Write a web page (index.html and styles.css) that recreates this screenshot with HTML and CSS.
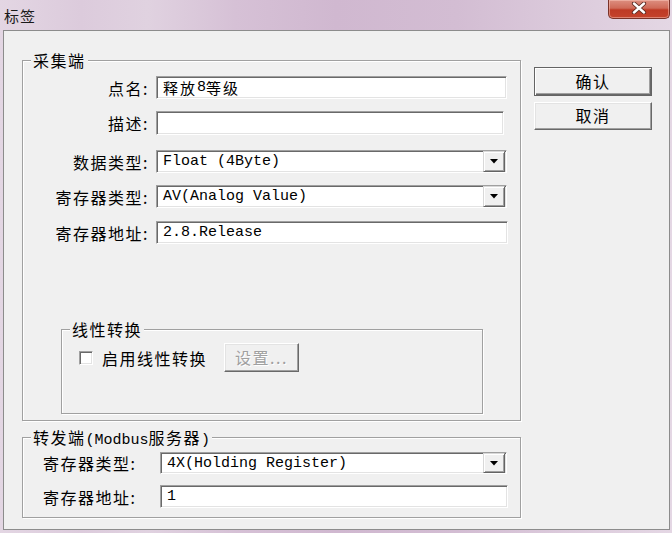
FILE: index.html
```html
<!DOCTYPE html>
<html lang="zh">
<head>
<meta charset="utf-8">
<title>标签</title>
<link rel="stylesheet" href="styles.css">
</head>
<body>
<div class="window">
  <div class="titlebar">
    <span class="title">标签</span>
    <div class="close">
      <svg width="16" height="12" viewBox="0 0 16 12">
        <path d="M3 1.5 L13 10.5 M13 1.5 L3 10.5" stroke="#5a2a22" stroke-width="4.2" stroke-linecap="round"/>
        <path d="M3 1.5 L13 10.5 M13 1.5 L3 10.5" stroke="#ffffff" stroke-width="2.4" stroke-linecap="round"/>
      </svg>
    </div>
  </div>
  <div class="client">
    <div class="main">
      <div class="group g1">
        <div class="legend">采集端</div>
        <div class="row r1">
          <span class="lbl">点名:</span>
          <div class="edit w351"><span class="cjk">释放</span>8<span class="cjk">等级</span></div>
        </div>
        <div class="row r2">
          <span class="lbl">描述:</span>
          <div class="edit w348 h24"></div>
        </div>
        <div class="row r3">
          <span class="lbl">数据类型:</span>
          <div class="edit combo w351"><span class="val">Float (4Byte)</span><span class="drop"><svg width="8" height="5" viewBox="0 0 8 5"><polygon points="0,0 8,0 4,4.5" fill="#000"/></svg></span></div>
        </div>
        <div class="row r4">
          <span class="lbl">寄存器类型:</span>
          <div class="edit combo w351"><span class="val">AV(Analog Value)</span><span class="drop"><svg width="8" height="5" viewBox="0 0 8 5"><polygon points="0,0 8,0 4,4.5" fill="#000"/></svg></span></div>
        </div>
        <div class="row r5">
          <span class="lbl">寄存器地址:</span>
          <div class="edit w352">2.8.Release</div>
        </div>
        <div class="group glin">
          <div class="legend">线性转换</div>
          <div class="linrow">
            <span class="check"></span>
            <span class="chklbl">启用线性转换</span>
            <div class="btn disabled">设置...</div>
          </div>
        </div>
      </div>
      <div class="group g2">
        <div class="legend">转发端<span class="asc">(Modbus</span>服务器<span class="asc">)</span></div>
        <div class="row2 first">
          <span class="lbl2">寄存器类型:</span>
          <div class="edit combo w347 h22"><span class="val">4X(Holding Register)</span><span class="drop"><svg width="8" height="5" viewBox="0 0 8 5"><polygon points="0,0 8,0 4,4.5" fill="#000"/></svg></span></div>
        </div>
        <div class="row2 second">
          <span class="lbl2">寄存器地址:</span>
          <div class="edit w348 h23">1</div>
        </div>
      </div>
    </div>
    <div class="side">
      <div class="btn default">确认</div>
      <div class="btn cancel">取消</div>
    </div>
  </div>
</div>
</body>
</html>
```
FILE: styles.css
```css
* { box-sizing: border-box; }
html, body { margin: 0; padding: 0; }
body {
  width: 672px;
  height: 533px;
  overflow: hidden;
  background: #d9c8d9;
  font-family: "Noto Sans CJK SC", "Noto Sans", sans-serif;
  color: #000;
}
.window {
  width: 672px;
  height: 533px;
  display: flex;
  flex-direction: column;
  background: linear-gradient(90deg, #e3d6e3 0%, #dccbdc 12%, #e0d2e0 22%, #d6c1d6 35%, #d0b8d0 50%, #d3bdd3 68%, #dccbdc 85%, #e4d7e4 100%);
}
.titlebar {
  height: 30px;
  display: flex;
  align-items: flex-start;
  padding-left: 4px;
}
.title {
  font-size: 15px;
  line-height: 15px;
  letter-spacing: 1px;
  margin-top: 8px;
  color: #1a1a1a;
}
.close {
  margin-left: auto;
  margin-right: 2px;
  width: 62px;
  height: 19px;
  border: 1px solid #7a3228;
  border-top: none;
  border-radius: 0 0 5px 5px;
  background: linear-gradient(180deg, #dd8f80 0%, #cf6a58 45%, #be3a25 55%, #c4432c 100%);
  box-shadow: inset 0 0 0 1px rgba(255, 210, 200, 0.45);
  display: flex;
  align-items: center;
  justify-content: center;
  padding-bottom: 2px;
}
.client {
  margin: 0 2px 3px 3px;
  height: 500px;
  border: 1px solid #8c8c8c;
  background: #f0f0f0;
  display: flex;
  padding-left: 18px;
}
.main {
  width: 499px;
  padding-top: 29px;
  display: flex;
  flex-direction: column;
}
.group {
  border: 1px solid #a0a0a0;
  box-shadow: inset 1px 1px 0 #fff, 1px 1px 0 #fff;
  display: flex;
  flex-direction: column;
}
.legend {
  align-self: flex-start;
  height: 20px;
  line-height: 20px;
  margin: -11px 0 -9px 8px;
  padding: 0 2px;
  background: #f0f0f0;
  font-size: 16px;
  letter-spacing: 1.5px;
  white-space: nowrap;
}
.asc {
  font-family: "Liberation Mono", monospace;
  font-size: 15px;
  letter-spacing: 0;
}
.g1 {
  width: 499px;
  height: 361px;
}
.row {
  display: flex;
  align-items: center;
}
.r1 { margin-top: 15px; }
.r2 { margin-top: 12px; }
.r3 { margin-top: 15px; }
.r4 { margin-top: 12px; }
.r5 { margin-top: 13px; }
.lbl {
  width: 126px;
  text-align: right;
  font-size: 16px;
  line-height: 20px;
  letter-spacing: 1.5px;
  white-space: nowrap;
  margin-right: 7px;
}
.edit {
  height: 23px;
  background: #fff;
  border: 1px solid;
  border-color: #a0a0a0 #fff #fff #a0a0a0;
  box-shadow: inset 1px 1px 0 #696969, inset -1px -1px 0 #e3e3e3;
  font-family: "Liberation Mono", monospace;
  font-size: 15px;
  line-height: 19px;
  padding-left: 6px;
  white-space: nowrap;
  display: flex;
  align-items: center;
}
.cjk {
  font-family: "Noto Sans CJK SC", sans-serif;
  font-size: 15px;
  line-height: 19px;
  letter-spacing: 2px;
}
.w347 { width: 347px; }
.w348 { width: 348px; }
.w351 { width: 351px; }
.w352 { width: 352px; }
.h22 { height: 22px; }
.h23 { height: 23px; }
.h24 { height: 24px; }
.combo {
  padding-right: 1px;
}
.combo .val { flex: 1; }
.drop {
  width: 22px;
  height: 21px;
  align-self: flex-start;
  background: #f0f0f0;
  border: 1px solid;
  border-color: #d8d8d8 #646464 #646464 #d8d8d8;
  box-shadow: inset 1px 1px 0 #fff, inset -1px -1px 0 #a0a0a0;
  display: flex;
  align-items: center;
  justify-content: center;
}
.h22 .drop { height: 20px; }
.glin {
  margin-top: 85px;
  margin-left: 38px;
  width: 422px;
  height: 85px;
}
.linrow {
  display: flex;
  align-items: center;
  margin-top: 13px;
  padding-left: 17px;
}
.check {
  width: 14px;
  height: 14px;
  background: #fff;
  border: 1px solid;
  border-color: #a0a0a0 #fff #fff #a0a0a0;
  box-shadow: inset 1px 1px 0 #696969, inset -1px -1px 0 #e3e3e3;
}
.chklbl {
  margin-left: 9px;
  font-size: 16px;
  line-height: 20px;
  letter-spacing: 1.5px;
  white-space: nowrap;
}
.btn {
  display: flex;
  align-items: center;
  justify-content: center;
  background: #f0f0f0;
  font-size: 16px;
  line-height: 20px;
  letter-spacing: 1.5px;
  border: 1px solid;
  border-color: #fff #696969 #696969 #fff;
  box-shadow: inset -1px -1px 0 #a0a0a0, inset 1px 1px 0 #e3e3e3;
}
.disabled {
  margin-left: 17px;
  width: 75px;
  height: 29px;
  color: #a0a0a0;
  text-shadow: 1px 1px 0 #fff;
  padding-bottom: 1px;
}
.g2 {
  margin-top: 16px;
  width: 499px;
  height: 81px;
}
.row2 {
  display: flex;
  align-items: center;
  padding-left: 20px;
}
.row2.first { margin-top: 14px; }
.row2.second { margin-top: 11px; }
.lbl2 {
  width: 117px;
  font-size: 16px;
  line-height: 20px;
  letter-spacing: 1.5px;
  white-space: nowrap;
}
.side {
  margin-left: 13px;
  padding-top: 36px;
  display: flex;
  flex-direction: column;
}
.side .btn {
  width: 118px;
  padding-bottom: 2px;
}
.default {
  height: 29px;
  border: 1px solid #646464;
  box-shadow: inset 1px 1px 0 #fff, inset -1px -1px 0 #696969, inset -2px -2px 0 #a0a0a0;
}
.cancel {
  margin-top: 6px;
  height: 28px;
}
```
